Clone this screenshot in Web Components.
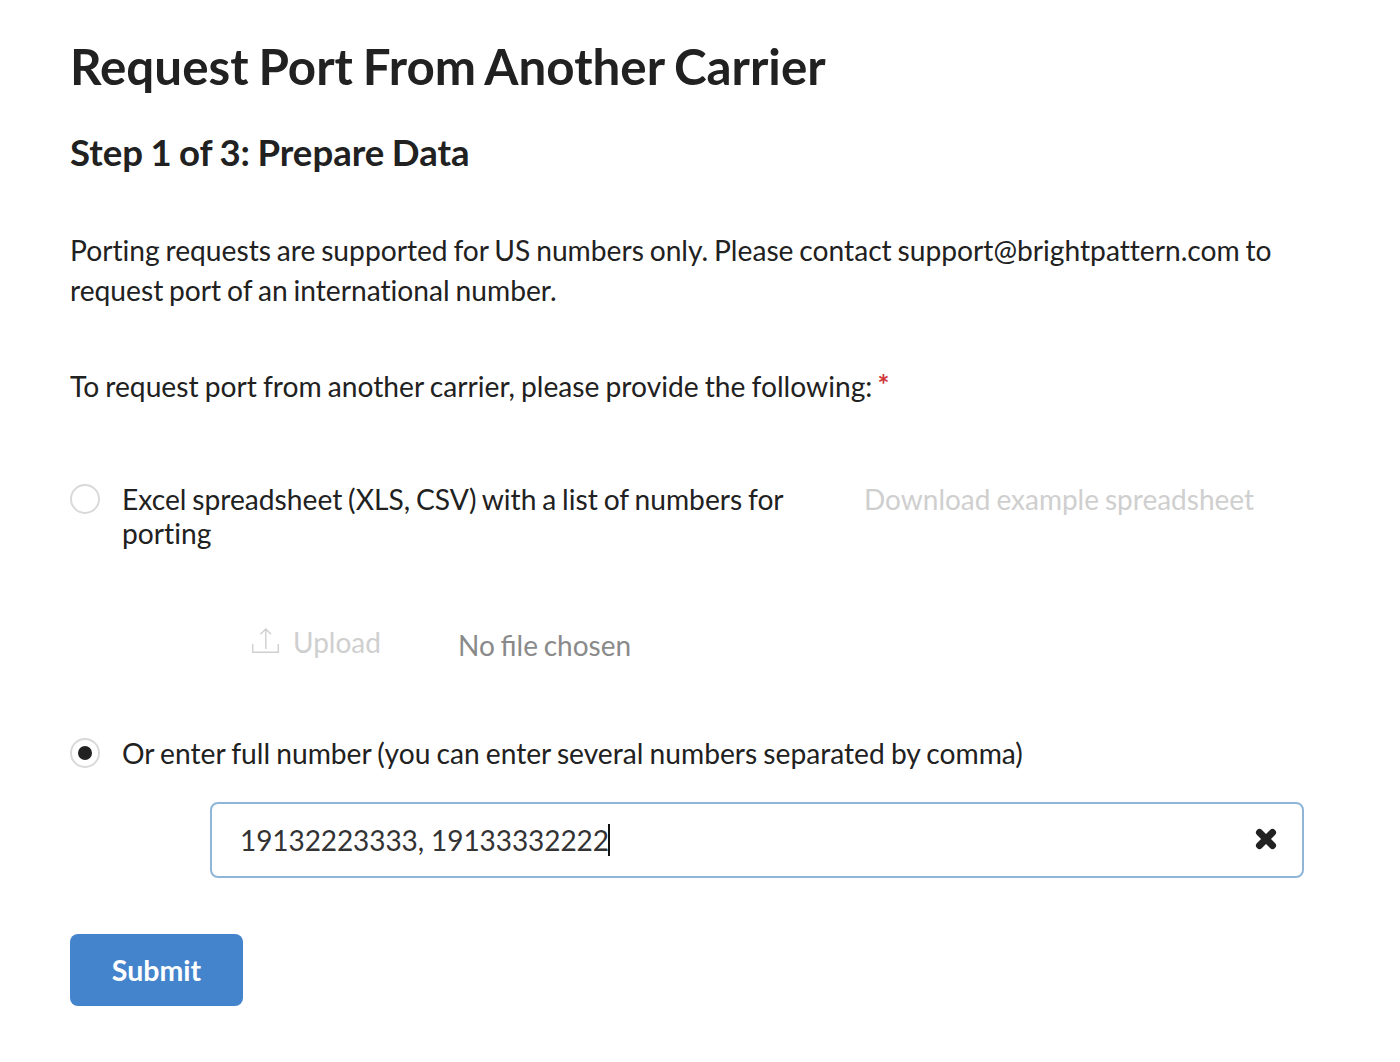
<!DOCTYPE html>
<html>
<head>
<meta charset="utf-8">
<style>
html, body { margin: 0; background: #fff; }
body { font-family: Lato, sans-serif; color: #212121; }
</style>
</head>
<body>
<port-request></port-request>

<script>
class RadioRow extends HTMLElement {
    constructor() {
        super();
        const checked = this.hasAttribute('checked');
        this.attachShadow({ mode: 'open' }).innerHTML = `
            <style>
                :host { display: flex; align-items: flex-start; }
                .circle {
                    flex: none;
                    box-sizing: border-box;
                    width: 30px;
                    height: 30px;
                    margin: 2px 22px 0 0;
                    border: 2px solid #d9d9d9;
                    border-radius: 50%;
                    display: flex;
                    align-items: center;
                    justify-content: center;
                }
                .dot { width: 14px; height: 14px; border-radius: 50%; background: #212121; }
                .label {
                    font-size: 28.2px;
                    line-height: 34px;
                    word-spacing: var(--label-word-spacing, -1.1px);
                    font-variant-ligatures: none;
                }
            </style>
            <div class="circle">${checked ? '<div class="dot"></div>' : ''}</div>
            <div class="label"><slot></slot></div>
        `;
    }
}

class UploadButton extends HTMLElement {
    constructor() {
        super();
        this.attachShadow({ mode: 'open' }).innerHTML = `
            <style>
                :host { display: inline-flex; align-items: center; color: #cfcfcf; font-size: 28px; line-height: 34px; }
                svg { width: 27px; height: 25px; margin: 0 14px 3px 0; }
            </style>
            <svg viewBox="0 0 27 25" fill="none" stroke="#cfcfcf" stroke-width="1.4">
                <path d="M.7 16v8.3h25.6V16"/>
                <path d="M13.8 21V1M8.5 6.3L13.8 1l5.2 5.3"/>
            </svg>
            <span><slot></slot></span>
        `;
    }
}

class NumberInput extends HTMLElement {
    constructor() {
        super();
        this.attachShadow({ mode: 'open' }).innerHTML = `
            <style>
                :host {
                    display: flex;
                    align-items: center;
                    justify-content: space-between;
                    box-sizing: border-box;
                    height: 76px;
                    padding: 0 25px 0 28px;
                    border: 2px solid #8fb6d6;
                    border-radius: 8px;
                    font-size: 28px;
                    letter-spacing: -0.08px;
                    color: #333;
                }
                .val { display: flex; align-items: center; }
                .caret { width: 2px; height: 32px; background: #111; margin-left: -1px; }
                svg { width: 22px; height: 22px; margin-bottom: 2px; }
            </style>
            <div class="val"><span><slot></slot></span><span class="caret"></span></div>
            <svg viewBox="0 0 22 22"><path d="M4.5 4.5 L17.5 17.5 M17.5 4.5 L4.5 17.5" stroke="#212121" stroke-width="7" stroke-linecap="round"/></svg>
        `;
    }
}

class SubmitButton extends HTMLElement {
    constructor() {
        super();
        this.attachShadow({ mode: 'open' }).innerHTML = `
            <style>
                :host {
                    display: inline-flex;
                    align-items: center;
                    justify-content: center;
                    width: 173px;
                    height: 72px;
                    border-radius: 8px;
                    background: #4484cc;
                    color: #fff;
                    font-size: 28.5px;
                    font-weight: 700;
                }
            </style>
            <slot></slot>
        `;
    }
}

class PortRequest extends HTMLElement {
    constructor() {
        super();
        this.attachShadow({ mode: 'open' }).innerHTML = `
            <style>
                :host { display: block; padding: 33px 96px 0 70px; height: 1029px; }
                h1 { margin: 0; font-size: 49.3px; line-height: 66px; font-weight: 700; word-spacing: -2px; font-variant-ligatures: none; }
                h2 { margin: 27px 0 0; font-size: 36.6px; line-height: 52px; font-weight: 700; word-spacing: -1.5px; }
                p { margin: 0; font-size: 28.2px; line-height: 40px; word-spacing: -1.1px; font-variant-ligatures: none; }
                .intro { margin-top: 52px; word-spacing: -1.4px; }
                .ask { margin-top: 54px; }
                .req { color: #d0383a; font-size: 28px; font-weight: 700; vertical-align: 2px; margin-left: -1px; }
                .sheet { display: flex; margin-top: 76px; --label-word-spacing: -1.4px; }
                .sheet radio-row { width: 794px; }
                .example { color: #cfcfcf; font-size: 28px; line-height: 34px; word-spacing: -1.2px; }
                .file { display: flex; align-items: flex-start; margin: 75px 0 0 182px; }
                .none { margin: 3px 0 0 77px; color: #8a8a8a; font-size: 28px; line-height: 34px; word-spacing: -1.4px; }
                .manual { margin-top: 74px; }
                number-input { margin: 32px 0 0 140px; }
                .actions { margin-top: 56px; }
            </style>
            <h1>Request Port From Another Carrier</h1>
            <h2>Step 1 of 3: Prepare Data</h2>
            <p class="intro">Porting requests are supported for US numbers only. Please contact support@brightpattern.com to request port of an international number.</p>
            <p class="ask">To request port from another carrier, please provide the following: <span class="req">*</span></p>
            <div class="sheet">
                <radio-row>Excel spreadsheet (XLS, CSV) with a list of numbers for porting</radio-row>
                <div class="example">Download example spreadsheet</div>
            </div>
            <div class="file">
                <upload-button>Upload</upload-button>
                <span class="none">No file chosen</span>
            </div>
            <radio-row class="manual" checked>Or enter full number (you can enter several numbers separated by comma)</radio-row>
            <number-input>19132223333, 19133332222</number-input>
            <div class="actions"><submit-button>Submit</submit-button></div>
        `;
    }
}

customElements.define('radio-row', RadioRow);
customElements.define('upload-button', UploadButton);
customElements.define('number-input', NumberInput);
customElements.define('submit-button', SubmitButton);
customElements.define('port-request', PortRequest);
</script>
</body>
</html>
